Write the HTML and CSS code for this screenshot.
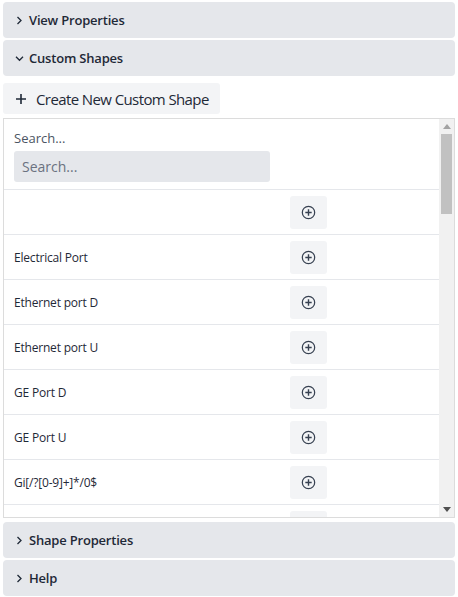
FILE: index.html
```html
<!DOCTYPE html>
<html>
<head>
<meta charset="utf-8">
<link rel="stylesheet" href="styles.css">
</head>
<body>
<div class="panel">
  <div class="section-header"><svg class="chev" viewBox="0 0 9 9" width="9" height="9"><path d="M2.5 1l3.5 3.5L2.5 8" fill="none" stroke="#1f2937" stroke-width="1.3"/></svg><span>View Properties</span></div>
  <div class="section-header"><svg class="chev" viewBox="0 0 9 9" width="9" height="9"><path d="M1 2.8l3.5 3.5L8 2.8" fill="none" stroke="#1f2937" stroke-width="1.3"/></svg><span>Custom Shapes</span></div>
  <div class="section-body">
    <button class="create-btn"><svg class="plus" viewBox="0 0 12 12" width="12" height="12"><path d="M6 1v10M1 6h10" stroke="#1f2937" stroke-width="1.6" fill="none"/></svg>Create New Custom Shape</button>
    <div class="list">
      <div class="list-scroll">
        <div class="search">
          <div class="search-label">Search...</div>
          <input class="search-input" type="text" placeholder="Search...">
        </div>
        <div class="rows" id="rows"></div>
      </div>
      <div class="scrollbar">
        <div class="sb-btn"><svg viewBox="0 0 8 5" width="8" height="5"><path d="M0 5L4 0L8 5z" fill="#a3a3a3"/></svg></div>
        <div class="sb-track"><div class="sb-thumb"></div></div>
        <div class="sb-btn"><svg viewBox="0 0 8 5" width="8" height="5"><path d="M0 0L8 0L4 5z" fill="#505050"/></svg></div>
      </div>
    </div>
  </div>
  <div class="section-header"><svg class="chev" viewBox="0 0 9 9" width="9" height="9"><path d="M2.5 1l3.5 3.5L2.5 8" fill="none" stroke="#1f2937" stroke-width="1.3"/></svg><span>Shape Properties</span></div>
  <div class="section-header"><svg class="chev" viewBox="0 0 9 9" width="9" height="9"><path d="M2.5 1l3.5 3.5L2.5 8" fill="none" stroke="#1f2937" stroke-width="1.3"/></svg><span>Help</span></div>
</div>
<script src="app.js"></script>
</body>
</html>
```
FILE: app.js
```js
const names = ["", "Electrical Port", "Ethernet port D", "Ethernet port U", "GE Port D", "GE Port U", "Gi[/?[0-9]+]*/0$",
  "Gi[/?[0-9]+]*/1$", "Gi[/?[0-9]+]*/2$", "Gi[/?[0-9]+]*/3$", "Optical Port", "Optical Port D", "Optical Port U",
  "Power Port", "Serial Port", "Serial Port D", "Serial Port U", "SFP Port", "SFP Port D", "SFP Port U",
  "Te Port D", "Te Port U", "USB Port", "Console Port", "Management Port", "Fan Tray", "Power Supply",
  "Line Card", "Chassis", "Slot", "Module", "Port Group", "Uplink", "Downlink", "Trunk", "Access Port", "Loopback", "Tunnel"];
const icon = '<svg viewBox="0 0 16 16" width="15" height="15"><circle cx="8" cy="8" r="6.6" fill="none" stroke="#374151" stroke-width="1.3"/><path d="M8 4.6v6.8M4.6 8h6.8" stroke="#374151" stroke-width="1.5"/></svg>';
const rows = document.getElementById('rows');
rows.innerHTML = names.map(n => '<div class="row"><div class="name"></div><div class="act"><button class="add-btn">' + icon + '</button></div></div>').join('');
rows.querySelectorAll('.name').forEach((el, i) => { el.textContent = names[i]; });
```
FILE: styles.css
```css
* { box-sizing: border-box; }
html, body { margin: 0; padding: 0; background: #fff; }
body { font-family: "Open Sans", "Noto Sans", sans-serif; color: #1f2937; width: 458px; height: 597px; overflow: hidden; }
.panel { padding: 2px 3px 0 3px; display: flex; flex-direction: column; }
.section-header {
  height: 36px; flex: none; background: #e5e7eb; border-radius: 4px; display: flex; align-items: center;
  padding-left: 12px; font-size: 13px; font-weight: 600; color: #1f2937; margin-bottom: 2px; letter-spacing: -0.2px;
}
.chev { flex: none; margin-right: 5px; margin-top: 1px; }
.section-body { padding: 5px 0 4px 0; }
.create-btn {
  height: 31px; padding: 0 11px 0 12px; background: #f3f4f6; border: 0; border-radius: 3px;
  font-family: inherit; font-size: 15px; color: #1f2937; display: flex; align-items: center; gap: 9px; letter-spacing: -0.6px;
}
.list {
  margin-top: 4px; height: 400px; border: 1px solid #dcdcdc; background: #fff; display: flex;
}
.list-scroll { flex: 1; min-width: 0; overflow-y: auto; scrollbar-width: none; }
.list-scroll::-webkit-scrollbar { display: none; }
.scrollbar { width: 15px; flex: none; background: #f1f1f1; display: flex; flex-direction: column; }
.sb-btn { height: 15px; display: flex; align-items: center; justify-content: center; flex: none; }
.sb-track { flex: 1; display: flex; flex-direction: column; }
.sb-thumb { height: 80px; margin: 0 2px 0 2px; background: #c1c1c1; }
.search { padding: 11px 10px 7px 10px; }
.search-label { font-size: 13px; color: #4b5563; line-height: 16px; margin-bottom: 5px; }
.search-input {
  display: block; width: 256px; height: 31px; border: 0; border-radius: 3px; background: #e5e7eb;
  padding: 0 8px; font-family: inherit; font-size: 14px; color: #1f2937; outline: none;
}
.search-input::placeholder { color: #6b7280; }
.row { display: flex; align-items: center; height: 45px; border-top: 1px solid #e5e7eb; }
.name { width: 286px; padding-left: 10px; font-size: 12px; color: #1f2937; letter-spacing: -0.2px; }
.add-btn {
  width: 37px; height: 33px; border: 0; border-radius: 3px; background: #f3f4f6; display: flex; align-items: center; justify-content: center; padding: 0;
}
```
